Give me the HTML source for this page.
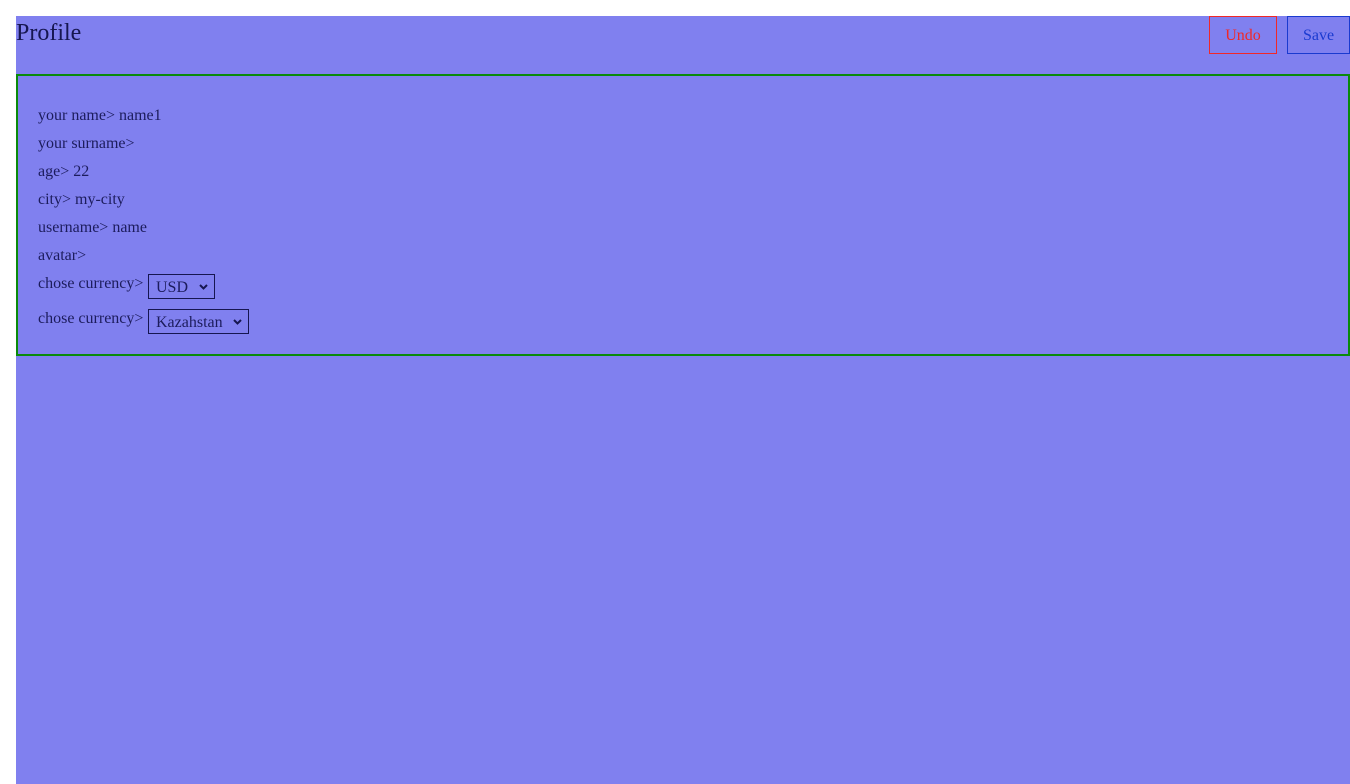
<!DOCTYPE html>
<html><head><style>
body{margin:0;background:#fff;font-family:"Liberation Serif",serif;color:#1c1c5c;}
#p{position:absolute;left:16px;top:16px;width:1334px;height:768px;background:#8080ef;}
h1{position:absolute;left:0;top:1px;margin:0;font-weight:normal;font-size:24px;line-height:32px;color:#161650;}
.b{position:absolute;top:0;height:38px;box-sizing:border-box;font-size:16px;line-height:38px;text-align:center;}
#box{position:absolute;left:0;top:58px;width:1334px;height:282px;box-sizing:border-box;border:2px solid #0a8a0a;}
.l{position:absolute;left:20px;font-size:16px;line-height:20px;white-space:nowrap;}
.s{position:absolute;left:130px;height:25px;box-sizing:border-box;border:1px solid #161650;font-size:16px;line-height:25px;padding-left:7px;}
.s svg{position:absolute;right:6px;top:9px;}
</style></head><body>
<div id="p">
<h1>Profile</h1>
<div class="b" style="left:1193px;width:68px;border:1px solid #f02828;color:#f02828">Undo</div>
<div class="b" style="left:1271px;width:63px;border:1px solid #1a3ad0;color:#1a3ad0">Save</div>
<div id="box">
<div class="l" style="top:30px">your name&gt; name1</div>
<div class="l" style="top:58px">your surname&gt;</div>
<div class="l" style="top:86px">age&gt; 22</div>
<div class="l" style="top:114px">city&gt; my-city</div>
<div class="l" style="top:142px">username&gt; name</div>
<div class="l" style="top:170px">avatar&gt;</div>
<div class="l" style="top:198px">chose currency&gt;</div>
<div class="s" style="top:198px;width:67px">USD<svg width="9" height="6" viewBox="0 0 9 6"><path d="M1 1l3.5 3.5L8 1" stroke="#161650" stroke-width="2" fill="none"/></svg></div>
<div class="l" style="top:233px">chose currency&gt;</div>
<div class="s" style="top:233px;width:101px">Kazahstan<svg width="9" height="6" viewBox="0 0 9 6"><path d="M1 1l3.5 3.5L8 1" stroke="#161650" stroke-width="2" fill="none"/></svg></div>
</div>
</div>
</body></html>
